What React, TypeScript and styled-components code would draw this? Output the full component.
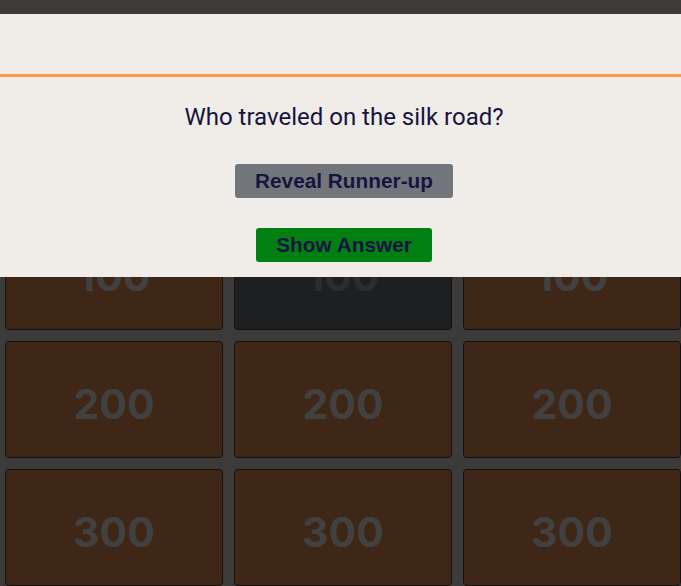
import * as React from "react"
import styled, { createGlobalStyle } from "styled-components"

const GlobalStyle = createGlobalStyle`
  body {
    margin: 0;
    background: #3c3b39;
    overflow: hidden;
  }
`

const Board = styled.div`
  display: grid;
  grid-template-columns: repeat(3, 218px);
  grid-auto-rows: 117px;
  gap: 11px;
  padding: 85px 0 0 5px;
`

const Tile = styled.div<{ $used?: boolean }>`
  display: flex;
  align-items: center;
  justify-content: center;
  box-sizing: border-box;
  padding-top: 9px;
  background: ${(p) => (p.$used ? "#1e1f21" : "#3e2716")};
  border: 1px solid #121110;
  border-radius: 4px;
  color: ${(p) => (p.$used ? "#2c2d2f" : "#414141")};
  font-family: Inter, sans-serif;
  font-weight: 700;
  font-size: 41px;
`

const Modal = styled.div`
  position: fixed;
  top: 14px;
  left: 0;
  right: -7px;
  background: #f0ede8;
`

const ModalHeader = styled.div`
  height: 60px;
  border-bottom: 3px solid #f99b4f;
`

const ModalBody = styled.div`
  display: flex;
  flex-direction: column;
  align-items: center;
  padding: 26px 0 15px;
`

const Question = styled.p`
  margin: 0 0 33px;
  font-family: Roboto, sans-serif;
  font-size: 24px;
  color: #17143f;
`

const Actions = styled.div`
  display: flex;
  flex-direction: column;
  align-items: center;
  gap: 30px;
`

const Button = styled.button<{ $tone: "gray" | "green" }>`
  height: 34px;
  padding: 0 20px;
  border: none;
  border-radius: 3px;
  background: ${(p) => (p.$tone === "green" ? "#008013" : "#72767b")};
  color: #17143f;
  font-family: "Liberation Sans", Arial, sans-serif;
  font-weight: 700;
  font-size: 20.8px;
  cursor: pointer;
`

const values = [100, 200, 300]
const columns = [0, 1, 2]

const App = () => {
  return (
    <>
      <GlobalStyle />
      <Board>
        {columns.map((i) => (
          <Tile key={"head" + i} />
        ))}
        {values.map((v) =>
          columns.map((i) => (
            <Tile key={v + "-" + i} $used={v === 100 && i === 1}>
              {v}
            </Tile>
          ))
        )}
      </Board>
      <Modal>
        <ModalHeader />
        <ModalBody>
          <Question>Who traveled on the silk road?</Question>
          <Actions>
            <Button $tone="gray">Reveal Runner-up</Button>
            <Button $tone="green">Show Answer</Button>
          </Actions>
        </ModalBody>
      </Modal>
    </>
  )
}

export default App
